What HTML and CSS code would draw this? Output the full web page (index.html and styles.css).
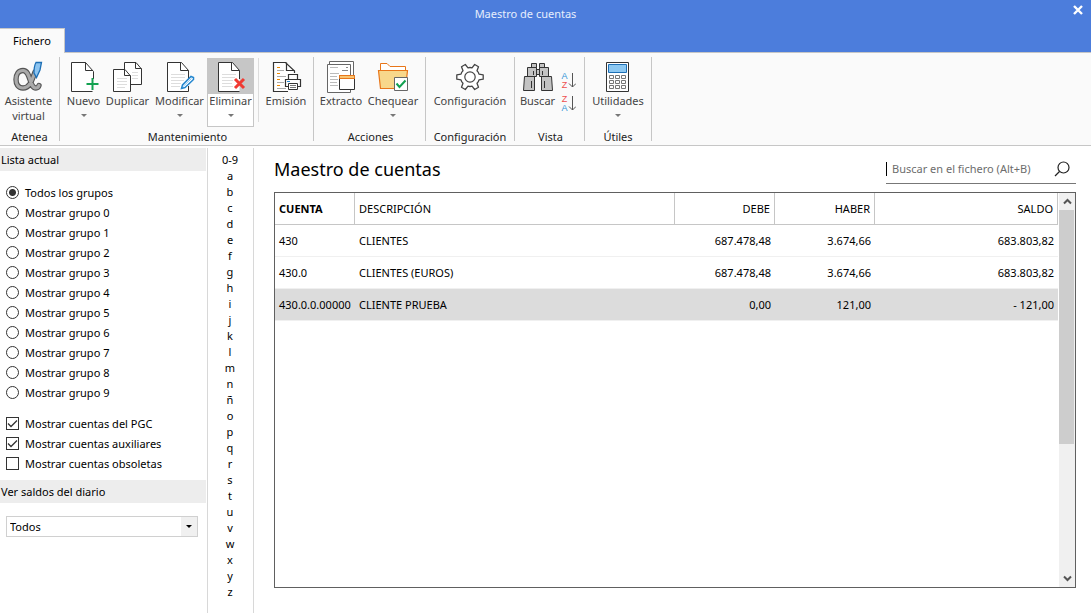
FILE: index.html
```html
<!DOCTYPE html>
<html lang="es">
<head>
<meta charset="utf-8">
<title>Maestro de cuentas</title>
<link rel="stylesheet" href="styles.css">
</head>
<body>
<header class="titlebar">
  <div class="title-row">
    <h1 class="window-title">Maestro de cuentas</h1>
    <button class="close" type="button" aria-label="Cerrar"><svg width="10" height="10" viewBox="0 0 10 10"><path d="M1 1L9 9M9 1L1 9" stroke="#fff" stroke-width="2.4"/></svg></button>
  </div>
  <button class="tab" type="button">Fichero</button>
</header>

<nav class="ribbon">
  <section class="group g-atenea">
    <div class="tools">
      <button class="tool" type="button">
        <svg width="32" height="32" viewBox="0 0 32 32" fill="none">
          <g transform="translate(-2 1)" stroke-linecap="round"><path d="M24 10C21 18 19 26 12 26C7 26 5 22 5 17.500C5 12.500 7.500 8.500 12 8.500C20 8.500 18 26 25 26C27 26 27.500 25 28 23.500" stroke="#555" stroke-width="5.400"/><path d="M24 10C21 18 19 26 12 26C7 26 5 22 5 17.500C5 12.500 7.500 8.500 12 8.500C20 8.500 18 26 25 26C27 26 27.500 25 28 23.500" stroke="#aaa" stroke-width="3.200"/></g>
          <path d="M23 1.500H28.500L27 9L23.500 16.500L21 12C21 8 21.500 4 23 1.500Z" fill="#8cc4f0" stroke="#1d6fb5" stroke-width="1.300"/>
        </svg>
        <span>Asistente<br>virtual</span>
      </button>
    </div>
    <h2 class="group-name">Atenea</h2>
  </section>

  <section class="group g-mantenimiento">
    <div class="tools">
      <button class="tool" type="button">
        <svg width="32" height="32" viewBox="0 0 32 32" fill="none"><path d="M25.500 18V10.500L17.500 1.500H3.500V30.500H22" fill="#fff"/><path d="M25.500 18V10.500L17.500 1.500H3.500V30.500H24.500" stroke="#333"/><path d="M17.500 1.500V9.500H25" stroke="#333"/><path d="M24.500 17V29M18.500 23H30.500" stroke="#12a150" stroke-width="2"/></svg>
        <span>Nuevo</span><i class="arrow"></i>
      </button>
      <button class="tool" type="button">
        <svg width="32" height="32" viewBox="0 0 32 32" fill="none"><path d="M12.500 8V1.500H24L29.500 8V23.500H19" fill="#fff" stroke="#333"/><path d="M23.500 1.500V7.500H29.500" stroke="#333"/><path d="M20 11.500H26M20 14.500H26M20 17.500H26" stroke="#ddd"/><path d="M1.500 8.500H13L18.500 15V30.500H1.500Z" fill="#fff" stroke="#333"/><path d="M12.500 8.500V14.500H18.500" stroke="#333"/><path d="M5 17.500H15M5 20.500H15M5 23.500H15M5 26.500H13" stroke="#ddd"/></svg>
        <span>Duplicar</span>
      </button>
      <button class="tool" type="button">
        <svg width="32" height="32" viewBox="0 0 32 32" fill="none"><path d="M24.500 30.500H3.500V1.500H17.500L24.500 9.500V19" fill="#fff" stroke="#333"/><path d="M16.500 1.500V9.500H24.500" stroke="#333"/><path d="M7 13.500H21M7 16.500H21M7 19.500H20M7 22.500H17M7 25.500H16" stroke="#ddd"/><path d="M24.500 25V30.500" stroke="#333"/><path d="M17.500 27.500L18.500 24L27 15.500L29.500 16.500L29.500 18.500L21 26.500Z" fill="#fff" stroke="#2386cf" stroke-width="1.500"/><path d="M19 25.500L27.500 17.500" stroke="#8cc4f0"/></svg>
        <span>Modificar</span><i class="arrow"></i>
      </button>
      <button class="tool selected" type="button">
        <svg width="32" height="32" viewBox="0 0 32 32" fill="none"><path d="M24.500 30.500H3.500V1.500H17.500L24.500 9.500V30.500" fill="#fff"/><path d="M24.500 30.500H3.500V1.500H17.500L24.500 9.500V18" stroke="#333"/><path d="M16.500 1.500V9.500H24.500" stroke="#333"/><path d="M7 13.500H21M7 16.500H20M7 19.500H18M7 22.500H17M7 25.500H18" stroke="#ddd"/><path d="M20 18L29 27M29 18L20 27" stroke="#f03a32" stroke-width="3"/></svg>
        <span>Eliminar</span><i class="arrow"></i>
      </button>
      <i class="divider"></i>
      <button class="tool" type="button">
        <svg width="32" height="32" viewBox="0 0 32 32" fill="none"><path d="M24.500 12V10L15.500 1.500H3.500V30.500H18" fill="#fff" stroke="#333" stroke-width="1.200"/><path d="M16.500 1.500V9.500H24.500" stroke="#333" stroke-width="1.200"/><path d="M7 6.500H10M7 12.500H10M7 18.500H10M7 24.500H10" stroke="#f08a00"/><path d="M7 9.500H14M7 15.500H16M7 21.500H14M7 27.500H16" stroke="#aaa"/><path d="M18.500 18V13.500H27.500V18" fill="#fff" stroke="#333" stroke-width="1.200"/><path d="M18 25.500H15.500V18.500H30.500V25.500H28" fill="#fff" stroke="#333" stroke-width="1.200"/><path d="M17 20.500H20" stroke="#2386cf"/><path d="M18.500 22.500H27.500V28.500H18.500Z" fill="#fff" stroke="#333"/><path d="M20 24.500H26M20 26.500H26" stroke="#777"/></svg>
        <span>Emisión</span>
      </button>
    </div>
    <h2 class="group-name">Mantenimiento</h2>
  </section>

  <section class="group g-acciones">
    <div class="tools">
      <button class="tool" type="button">
        <svg width="32" height="32" viewBox="0 0 32 32" fill="none"><path d="M4.500 3V.500H28.500V28.500H26" fill="#fff" stroke="#666"/><path d="M2.500 3.500H25.500V31.500H2.500Z" fill="#fff" stroke="#666"/><path d="M5 6.500H13M5 12.500H14M5 15.500H12M5 18.500H13M5 21.500H12M5 24.500H13" stroke="#bbb"/><path d="M21 6.500H23M17 9.500H23" stroke="#888"/><path d="M14.500 14.500H29.500V28.500H14.500Z" fill="#fff" stroke="#333"/><path d="M14.500 14.500H29.500V17.500H14.500Z" fill="#f8c471" stroke="#e8761a"/></svg>
        <span>Extracto</span>
      </button>
      <button class="tool" type="button">
        <svg width="32" height="32" viewBox="0 0 32 32" fill="none"><path d="M3.500 10V2.500H10L13 5.500H28.500V10" fill="#fff" stroke="#e8761a"/><path d="M1.500 9.500H30.500L28.500 27.500H3.500Z" fill="#f8d78b" stroke="#e8761a" stroke-width="1.200"/><path d="M17.500 16.500H30.500V29.500H17.500Z" fill="#fff" stroke="#666"/><path d="M19.500 22.500L22.500 26L28.500 19.500" stroke="#12a150" stroke-width="2"/></svg>
        <span>Chequear</span><i class="arrow"></i>
      </button>
    </div>
    <h2 class="group-name">Acciones</h2>
  </section>

  <section class="group g-config">
    <div class="tools">
      <button class="tool" type="button">
        <svg width="32" height="32" viewBox="-16 -16 32 32" fill="none"><path d="M9 -2.900L13.200 -2.200V2.200L9 2.900Q8.500 5 7 6.300L8.500 10.300L4.700 12.500L2 9.200Q0 9.800 -2 9.200L-4.700 12.500L-8.500 10.300L-7 6.300Q-8.500 5 -9 2.900L-13.200 2.200V-2.200L-9 -2.900Q-8.500 -5 -7 -6.300L-8.500 -10.300L-4.700 -12.500L-2 -9.200Q0 -9.800 2 -9.200L4.700 -12.500L8.500 -10.300L7 -6.300Q8.500 -5 9 -2.900Z" fill="#fff" stroke="#444" stroke-width="1.300" stroke-linejoin="round"/><circle r="5.200" stroke="#444" stroke-width="1.200"/></svg>
        <span>Configuración</span>
      </button>
    </div>
    <h2 class="group-name">Configuración</h2>
  </section>

  <section class="group g-vista">
    <div class="tools">
      <button class="tool" type="button">
        <svg width="32" height="32" viewBox="0 0 32 32" fill="#c3c3c3" stroke="#333"><path d="M9.500 2.500H14.500V6.500H9.500ZM17.500 2.500H22.500V6.500H17.500ZM5.500 6.500H14.500V15.500H5.500ZM17.500 6.500H26.500V15.500H17.500ZM14.500 8.500H17.500V13.500H14.500ZM2.500 15.500H12.500V29.500H1.500ZM19.500 15.500H29.500L30.500 29.500H19.500Z"/><path d="M11.500 10V14M20.500 10V14M9.500 20V27M22.500 20V27"/></svg>
        <span>Buscar</span>
      </button>
      <div class="sorts">
        <button class="sort" type="button" aria-label="Orden ascendente"><span class="pair"><span class="blue">A</span><span class="red">Z</span></span><svg width="8" height="18" viewBox="0 0 8 18"><path d="M4.500 1V15M1 11.500L4.500 15L8 11.500" fill="none" stroke="#555"/></svg></button>
        <button class="sort" type="button" aria-label="Orden descendente"><span class="pair"><span class="red">Z</span><span class="blue">A</span></span><svg width="8" height="18" viewBox="0 0 8 18"><path d="M4.500 1V15M1 11.500L4.500 15L8 11.500" fill="none" stroke="#555"/></svg></button>
      </div>
    </div>
    <h2 class="group-name">Vista</h2>
  </section>

  <section class="group g-utiles">
    <div class="tools">
      <button class="tool" type="button">
        <svg width="32" height="32" viewBox="0 0 32 32" fill="#fff"><path d="M4.500 1.500H26.500V30.500H4.500Z" stroke="#333"/><path d="M6.500 3.500H24.500V11.500H6.500Z" fill="#8cc8f2" stroke="#1d6fb5"/><path d="M7.500 14.500H11.500V17.500H7.500ZM13.500 14.500H17.500V17.500H13.500ZM19.500 14.500H23.500V17.500H19.500ZM7.500 19.500H11.500V22.500H7.500ZM13.500 19.500H17.500V22.500H13.500ZM19.500 19.500H23.500V22.500H19.500ZM7.500 24.500H11.500V27.500H7.500ZM13.500 24.500H17.500V27.500H13.500ZM19.500 24.500H23.500V27.500H19.500Z" stroke="#777"/></svg>
        <span>Utilidades</span><i class="arrow"></i>
      </button>
    </div>
    <h2 class="group-name">Útiles</h2>
  </section>
</nav>

<main class="workspace">
  <aside class="sidebar">
    <h2 class="panel-title">Lista actual</h2>
    <form class="filters">
      <label><input type="radio" name="grupo" checked>Todos los grupos</label>
      <label><input type="radio" name="grupo">Mostrar grupo 0</label>
      <label><input type="radio" name="grupo">Mostrar grupo 1</label>
      <label><input type="radio" name="grupo">Mostrar grupo 2</label>
      <label><input type="radio" name="grupo">Mostrar grupo 3</label>
      <label><input type="radio" name="grupo">Mostrar grupo 4</label>
      <label><input type="radio" name="grupo">Mostrar grupo 5</label>
      <label><input type="radio" name="grupo">Mostrar grupo 6</label>
      <label><input type="radio" name="grupo">Mostrar grupo 7</label>
      <label><input type="radio" name="grupo">Mostrar grupo 8</label>
      <label><input type="radio" name="grupo">Mostrar grupo 9</label>
      <div class="checks">
        <label><span class="box"><input type="checkbox" checked><svg width="13" height="13" viewBox="0 0 13 13"><path d="M2 6.500L5 9.500L11 3.500" fill="none" stroke="#333" stroke-width="1.300"/></svg></span>Mostrar cuentas del PGC</label>
        <label><span class="box"><input type="checkbox" checked><svg width="13" height="13" viewBox="0 0 13 13"><path d="M2 6.500L5 9.500L11 3.500" fill="none" stroke="#333" stroke-width="1.300"/></svg></span>Mostrar cuentas auxiliares</label>
        <label><span class="box"><input type="checkbox"></span>Mostrar cuentas obsoletas</label>
      </div>
    </form>
    <h2 class="panel-title" id="saldos">Ver saldos del diario</h2>
    <div class="combo">
      <select aria-labelledby="saldos"><option>Todos</option></select>
      <span class="combo-arrow"><i></i></span>
    </div>
  </aside>

  <nav class="index" aria-label="Índice">
    <a href="#">0-9</a><a href="#">a</a><a href="#">b</a><a href="#">c</a><a href="#">d</a><a href="#">e</a><a href="#">f</a><a href="#">g</a><a href="#">h</a><a href="#">i</a><a href="#">j</a><a href="#">k</a><a href="#">l</a><a href="#">m</a><a href="#">n</a><a href="#">ñ</a><a href="#">o</a><a href="#">p</a><a href="#">q</a><a href="#">r</a><a href="#">s</a><a href="#">t</a><a href="#">u</a><a href="#">v</a><a href="#">w</a><a href="#">x</a><a href="#">y</a><a href="#">z</a>
  </nav>

  <section class="content">
    <div class="content-head">
      <h2 class="page-title">Maestro de cuentas</h2>
      <div class="search">
        <i class="caret"></i>
        <input type="text" placeholder="Buscar en el fichero (Alt+B)" aria-label="Buscar en el fichero">
        <button type="button" aria-label="Buscar"><svg width="16" height="16" viewBox="0 0 16 16" fill="none" stroke="#222" stroke-width="1.200"><circle cx="9.500" cy="6.500" r="5.500"/><path d="M5.500 10.500L1 15"/></svg></button>
      </div>
    </div>
    <div class="grid-frame">
      <div class="grid-body">
        <table>
          <colgroup><col class="c-cuenta"><col class="c-desc"><col class="c-debe"><col class="c-haber"><col class="c-saldo"></colgroup>
          <thead><tr><th class="sorted">CUENTA</th><th>DESCRIPCIÓN</th><th class="num">DEBE</th><th class="num">HABER</th><th class="num">SALDO</th></tr></thead>
          <tbody>
            <tr><td>430</td><td>CLIENTES</td><td class="num">687.478,48</td><td class="num">3.674,66</td><td class="num">683.803,82</td></tr>
            <tr><td>430.0</td><td>CLIENTES (EUROS)</td><td class="num">687.478,48</td><td class="num">3.674,66</td><td class="num">683.803,82</td></tr>
            <tr class="current"><td>430.0.0.00000</td><td>CLIENTE PRUEBA</td><td class="num">0,00</td><td class="num">121,00</td><td class="num">- 121,00</td></tr>
          </tbody>
        </table>
      </div>
      <div class="scrollbar">
        <button type="button" aria-label="Subir"><svg width="9" height="7" viewBox="0 0 9 7"><path d="M1 5.500L4.500 2L8 5.500" fill="none" stroke="#555" stroke-width="2"/></svg></button>
        <div class="track"><div class="thumb"></div></div>
        <button type="button" aria-label="Bajar"><svg width="9" height="7" viewBox="0 0 9 7"><path d="M1 1.500L4.500 5L8 1.500" fill="none" stroke="#555" stroke-width="2"/></svg></button>
      </div>
    </div>
  </section>
</main>
</body>
</html>
```

FILE: styles.css
```css
* { box-sizing: border-box; }

body {
  margin: 0;
  min-height: 100vh;
  display: flex;
  flex-direction: column;
  background: #fff;
  color: #000;
  font: 11px/15px "Noto Sans", "Open Sans", sans-serif;
}

h1, h2 { margin: 0; font-size: 11px; font-weight: 400; }

button, input, select { font: inherit; color: inherit; }

button { margin: 0; padding: 0; border: 0; background: none; }

svg { display: block; }

/* Title bar */
.titlebar {
  display: flex;
  flex-direction: column;
  align-items: flex-start;
  background: #4c7ddc;
}

.title-row { display: flex; width: 100%; height: 28px; }

.window-title {
  flex: 1;
  color: #e6eefc;
  line-height: 28px;
  text-align: center;
}

.close {
  width: 40px;
  height: 20px;
  padding-right: 8px;
  display: flex;
  align-items: center;
  justify-content: flex-end;
}

.tab {
  height: 25px;
  padding: 0 13px 2px;
  margin-bottom: -1px;
  border-top: 1px solid #c8c8c8;
  border-right: 1px solid #c8c8c8;
  background: #fafafa;
  position: relative;
}

/* Ribbon */
.ribbon {
  display: flex;
  padding: 4px 0;
  border-top: 1px solid #c6c6c6;
  border-bottom: 1px solid #c6c6c6;
  background: #fafafa;
}

.group {
  display: flex;
  flex-direction: column;
  height: 84px;
  border-right: 1px solid #c6c6c6;
}

.tools {
  display: flex;
  flex: none;
  justify-content: center;
  height: 72px;
  padding: 1px 0 2px;
}

.g-atenea { width: 60px; }
.g-mantenimiento { width: 254px; }
.g-acciones { width: 112px; }
.g-config { width: 89px; }
.g-vista { width: 70px; }
.g-utiles { width: 67px; }

.g-atenea .tools { padding-right: 2px; }

.g-mantenimiento .tools {
  display: grid;
  grid-template-columns: 39px 49px 55px 47px 5px 1fr;
  padding-left: 4px;
}

.g-acciones .tools {
  display: grid;
  grid-template-columns: 54px 50px;
  justify-content: start;
}

.group-name { line-height: 15px; text-align: center; color: #222; }

.g-mantenimiento .group-name, .g-acciones .group-name, .g-vista .group-name { padding-left: 2px; }

.tool {
  display: flex;
  flex-direction: column;
  align-items: center;
  padding-top: 3px;
  color: #444;
  white-space: nowrap;
}

.arrow {
  margin-top: 6px;
  border: 3px solid transparent;
  border-top-color: #777;
  border-bottom: 0;
}

.selected {
  padding-top: 2px;
  border: 1px solid #c6c6c6;
  background: linear-gradient(#c6c6c6 35px, #fff 35px);
}

.divider { width: 1px; height: 64px; margin-left: 4px; background: #dcdcdc; }

.g-vista .tools { padding-right: 3px; }

.sorts { display: flex; flex-direction: column; gap: 5px; padding: 14px 0 0 6px; }

.sort { display: flex; }

.pair {
  display: flex;
  flex-direction: column;
  width: 7px;
  font: 9px/9px "Liberation Sans", sans-serif;
}

.blue { color: #2f93d6; }
.red { color: #ee4f4f; }

/* Workspace */
.workspace { flex: 1; display: flex; padding-top: 2px; }

.sidebar { width: 208px; padding-right: 1px; border-right: 1px solid #d8d8d8; }

.panel-title {
  padding-left: 1px;
  background: #ededed;
  line-height: 23px;
}

.filters { padding: 11px 0 7px 6px; }

.filters label { display: flex; align-items: center; gap: 6px; height: 20px; }

.checks { padding-top: 11px; }

.filters input {
  appearance: none;
  width: 13px;
  height: 13px;
  margin: 0;
  border: 1px solid #333;
  background: #fff;
}

.filters input[type="radio"] { border-radius: 50%; }

.filters input[type="radio"]:checked {
  background: radial-gradient(circle, #333 3px, #fff 4px);
}

.box { display: grid; }

.box > * { grid-area: 1 / 1; }

.combo { display: grid; margin: 13px 8px 0 6px; height: 21px; }

.combo > * { grid-area: 1 / 1; }

.combo select {
  appearance: none;
  padding: 0 20px 0 3px;
  border: 1px solid #d0d0d0;
  border-radius: 0;
  background: #fff;
}

.combo-arrow {
  justify-self: end;
  display: grid;
  place-items: center;
  width: 16px;
  margin: 1px;
  background: #f0f0f0;
  pointer-events: none;
}

.combo-arrow i { border: 3px solid transparent; border-top-color: #000; border-bottom: 0; }

.index {
  width: 46px;
  display: flex;
  flex-direction: column;
  padding-top: 4px;
  padding-right: 1px;
  border-right: 1px solid #d8d8d8;
  text-align: center;
}

.index a { color: inherit; line-height: 16px; text-decoration: none; }

/* Account list */
.content {
  flex: 1;
  display: flex;
  flex-direction: column;
  padding: 0 15px 25px 20px;
}

.content-head { display: flex; justify-content: space-between; height: 44px; }

.page-title { font-size: 18px; line-height: 43px; }

.search {
  display: flex;
  align-items: center;
  width: 190px;
  height: 26px;
  margin-top: 10px;
  padding: 0 6px 4px 0;
  border-bottom: 1px solid #777;
}

.caret { width: 1px; height: 14px; background: #000; }

.search input {
  flex: 1;
  min-width: 0;
  padding: 0 5px;
  border: 0;
  outline: 0;
  background: none;
}

.search input::placeholder { color: #6d6d6d; opacity: 1; }

.grid-frame { flex: 1; display: flex; border: 1px solid #606060; }

.grid-body { flex: 1; }

table { width: 100%; border-collapse: separate; border-spacing: 0; table-layout: fixed; }

.c-cuenta { width: 80px; }
.c-desc { width: 320px; }
.c-debe, .c-haber { width: 100px; }

th, td {
  height: 32px;
  padding: 0 4px;
  border-bottom: 1px solid #f0f0f0;
  font-weight: 400;
  text-align: left;
  white-space: nowrap;
}

th { border-bottom-color: #c6c6c6; border-right: 1px solid #c6c6c6; }

.sorted { font-weight: 700; }

.num { text-align: right; }

.current td { background: #dcdcdc; }

.scrollbar {
  display: flex;
  flex-direction: column;
  width: 16px;
  margin-left: 1px;
  background: #f0f0f0;
}

.scrollbar button { display: grid; place-items: center; height: 17px; }

.track { flex: 1; }

.thumb { width: 15px; height: 65%; background: #cdcdcd; }
```
